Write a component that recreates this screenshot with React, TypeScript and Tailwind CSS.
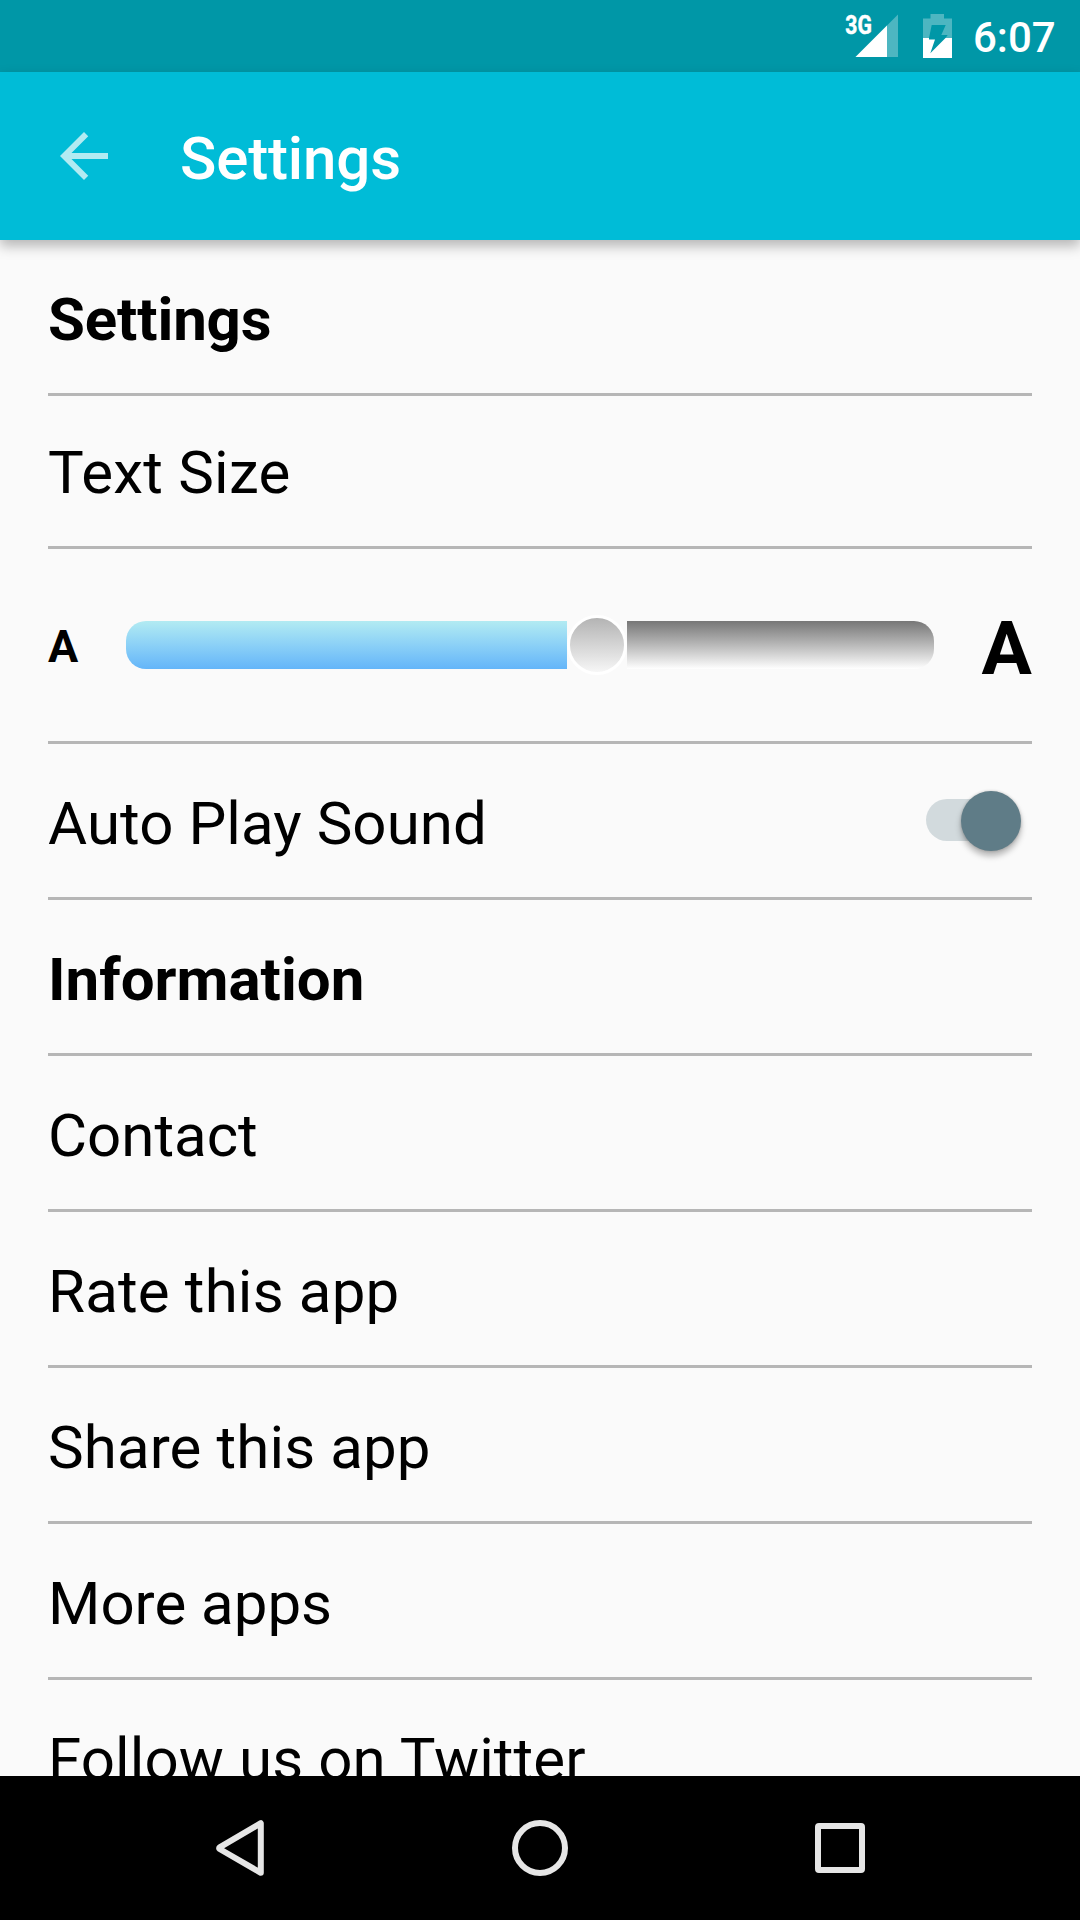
import React from "react";

function StatusBar() {
  return (
    <div className="flex h-[72px] shrink-0 justify-end bg-[#0097a7] pr-[24px]">
      <svg width="60" height="72" viewBox="843 0 60 72" className="shrink-0">
        <path d="M898 14.500V57H855.500z" fill="#fff" fillOpacity=".3" />
        <path d="M887 25.500V57H855.500z" fill="#fff" />
        <text
          x="845.300"
          y="33.500"
          fontFamily="Roboto"
          fontWeight="700"
          fontSize="25.500"
          fill="#fff"
          stroke="#fff"
          strokeWidth=".5"
          textLength="26.500"
          lengthAdjust="spacingAndGlyphs"
        >
          3G
        </text>
      </svg>
      <svg width="29" height="72" viewBox="923 0 29 72" className="ml-[20px] shrink-0">
        <path
          d="M930.500 14h13.500v4.500h8V38h-6.500l2.200-3h-6.400l4.400-10h-14L929 38h-6V18.500h7.500z"
          fill="#fff"
          fillOpacity=".3"
        />
        <path d="M923 38h6v1.500h6L930.300 53.300 945.500 38h6.500v20h-29z" fill="#fff" />
      </svg>
      <span className="ml-[21px] w-[83px] whitespace-nowrap pt-[13px] text-[42px] font-medium leading-[49px] text-white">6:07</span>
    </div>
  );
}

function AppBar() {
  return (
    <header className="relative z-10 flex h-[168px] shrink-0 bg-[#00bcd7] pl-[48px] shadow-[0_6px_12px_rgba(0,0,0,0.28)]">
      <svg width="72" height="72" viewBox="0 0 24 24" className="mt-[48px]" fill="#b2ebf2">
        <path d="M20 11H7.830l5.590-5.590L12 4l-8 8 8 8 1.410-1.410L7.830 13H20v-2z" />
      </svg>
      <h1 className="ml-[60px] mt-[52px] text-[60px] font-medium leading-[70px] tracking-[-0.14px] text-white">Settings</h1>
    </header>
  );
}

function Heading({ children }: { children: React.ReactNode }) {
  return (
    <h2 className="h-[156px] border-b-[3px] border-[#b6b6b6] pt-[45px] text-[60px] font-bold leading-[70px]">{children}</h2>
  );
}

function Row({ children }: { children: React.ReactNode }) {
  return (
    <div className="flex h-[156px] shrink-0 justify-between border-b-[3px] border-[#b6b6b6] pt-[45px] text-[60px] leading-[70px]">
      {children}
    </div>
  );
}

function TextSizeSlider() {
  return (
    <div className="flex h-[195px] border-b-[3px] border-[#b6b6b6] font-bold">
      <span className="w-[78px] pt-[71px] text-[45px] leading-[53px]">A</span>
      <div className="mt-[66px] flex h-[60px] w-[808px] items-center">
        <div className="h-[48px] w-[441px] rounded-l-[20px] bg-linear-to-b from-[#b2ebf2] to-[#64b5f9]" />
        <div className="size-[60px] rounded-full border-[3px] border-white bg-linear-to-b from-[#b0b0b0] to-[#fafafa] bg-origin-border" />
        <div className="h-[48px] flex-1 rounded-r-[20px] bg-linear-to-b from-[#777] to-white" />
      </div>
      <span className="ml-[48px] pt-[55px] text-[75px] leading-[88px]">A</span>
    </div>
  );
}

function Toggle() {
  return (
    <div className="mr-[11px] mt-[2px] flex size-fit">
      <div className="mt-[8px] h-[42px] w-[66px] rounded-l-full bg-[#d2dadd]" />
      <div className="-ml-[31px] size-[60px] rounded-full bg-[#5f7c87] shadow-[0_5px_6px_rgba(0,0,0,0.28),0_0_3px_rgba(0,0,0,0.2)]" />
    </div>
  );
}

function NavBar() {
  return (
    <nav className="flex h-[144px] shrink-0 items-center justify-center gap-[240px] bg-black">
      {[
        <path key="back" d="M50.800 5.200V54.800L9.600 31Q8.600 30.200 9.600 29.400z" />,
        <circle key="home" cx="30" cy="30" r="25" />,
        <rect key="recent" x="8" y="8" width="44" height="44" rx="1" />,
      ].map((shape, i) => (
        <svg key={i} width="60" height="60" viewBox="0 0 60 60" fill="none" stroke="#e6e6e6" strokeWidth="6" strokeLinejoin="round">
          {shape}
        </svg>
      ))}
    </nav>
  );
}

export default function App() {
  return (
    <div className="flex h-[1920px] w-[1080px] flex-col overflow-hidden bg-[#fafafa] font-[Roboto,sans-serif] text-black">
      <StatusBar />
      <AppBar />
      <main className="min-h-0 flex-1 overflow-hidden px-[48px]">
        <Heading>
          <span className="tracking-[-0.14px]">Settings</span>
        </Heading>
        <div className="h-[153px] border-b-[3px] border-[#b6b6b6] pt-[42px] text-[60px] leading-[70px] tracking-[0.25px]">Text Size</div>
        <TextSizeSlider />
        <Row>
          <span className="tracking-[0.07px]">Auto Play Sound</span>
          <Toggle />
        </Row>
        <Heading>Information</Heading>
        <Row>Contact</Row>
        <Row>
          <span className="tracking-[0.18px]">Rate this app</span>
        </Row>
        <Row>
          <span className="tracking-[0.12px]">Share this app</span>
        </Row>
        <Row>More apps</Row>
        <Row>
          <span className="tracking-[0.12px]">Follow us on Twitter</span>
        </Row>
      </main>
      <NavBar />
    </div>
  );
}
